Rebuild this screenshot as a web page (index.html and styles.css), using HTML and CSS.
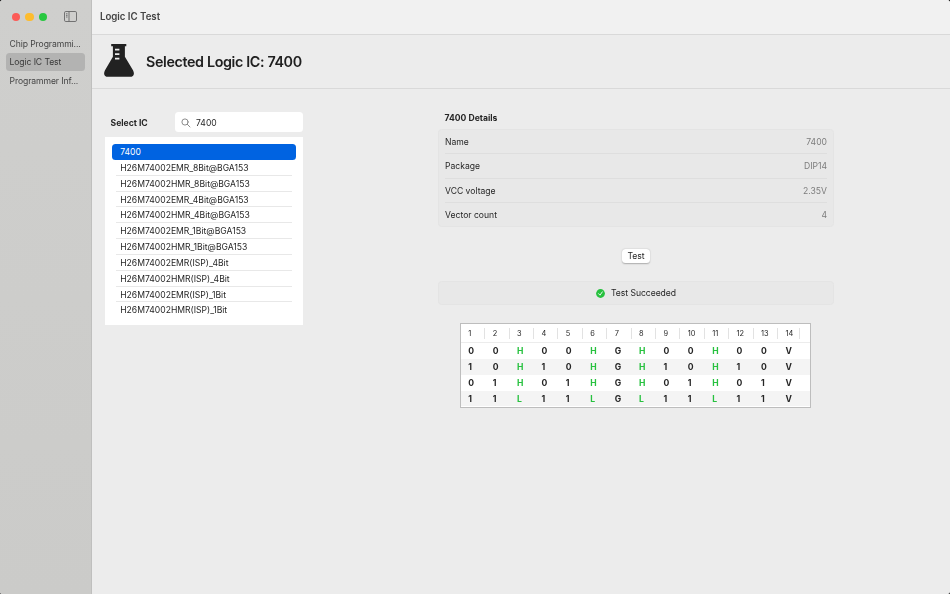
FILE: index.html
```html
<!DOCTYPE html>
<html lang="en">
<head>
<meta charset="utf-8">
<title>Logic IC Test</title>
<link rel="stylesheet" href="styles.css">
</head>
<body>
<div class="window">
  <aside class="sidebar">
    <div class="controls">
      <span class="light red"></span><span class="light yellow"></span><span class="light green"></span>
      <svg class="toggle" width="13" height="11" viewBox="0 0 13 11" fill="none" stroke="#686868" stroke-width=".9"><rect x=".5" y=".5" width="12" height="10" rx="1.300"/><path d="M5 .5v10M2 2.800h1.500M2 4.400h1.500M2 6h1.500"/></svg>
    </div>
    <nav>
      <a class="nav-item">Chip Programmi...</a>
      <a class="nav-item active">Logic IC Test</a>
      <a class="nav-item">Programmer Inf...</a>
    </nav>
  </aside>
  <main class="main">
    <header class="titlebar">Logic IC Test</header>
    <section class="banner">
      <svg class="flask" width="30" height="33" viewBox="0 0 30 33"><path fill="#222" fill-rule="evenodd" d="M7.200 0h15.100v2.200h-1.400v10.600l8.100 13.500c2.100 3.900.3 6.500-3 6.500H4c-3.300 0-5.100-2.600-3-6.500L8.900 12.800V2.200H7.200zM11 4.700v1.700h4.400V4.700zM11 9.200v1.700h4.400V9.200zM11 13.700v1.700h4.400v-1.700z"/></svg>
      <h1>Selected Logic IC: 7400</h1>
    </section>
    <div class="content">
      <section class="picker">
        <div class="search-row">
          <label>Select IC</label>
          <div class="search">
            <svg width="10" height="10" viewBox="0 0 10 10" fill="none" stroke="#808080" stroke-width=".9" stroke-linecap="round"><circle cx="4" cy="4" r="3.100"/><path d="M6.300 6.300 9 9"/></svg>
            <span>7400</span>
          </div>
        </div>
        <ul class="list">
          <li class="selected">7400</li>
          <li>H26M74002EMR_8Bit@BGA153</li>
          <li>H26M74002HMR_8Bit@BGA153</li>
          <li>H26M74002EMR_4Bit@BGA153</li>
          <li>H26M74002HMR_4Bit@BGA153</li>
          <li>H26M74002EMR_1Bit@BGA153</li>
          <li>H26M74002HMR_1Bit@BGA153</li>
          <li>H26M74002EMR(ISP)_4Bit</li>
          <li>H26M74002HMR(ISP)_4Bit</li>
          <li>H26M74002EMR(ISP)_1Bit</li>
          <li>H26M74002HMR(ISP)_1Bit</li>
        </ul>
      </section>
      <section class="details">
        <h2>7400 Details</h2>
        <dl class="box">
          <div><dt>Name</dt><dd>7400</dd></div>
          <div><dt>Package</dt><dd>DIP14</dd></div>
          <div><dt>VCC voltage</dt><dd>2.35V</dd></div>
          <div><dt>Vector count</dt><dd>4</dd></div>
        </dl>
        <button class="test">Test</button>
        <div class="box status">
          <svg width="9" height="9" viewBox="0 0 9 9"><circle cx="4.500" cy="4.500" r="4.400" fill="#27c13f"/><path d="M2.600 4.700 4 6.200 6.300 2.900" fill="none" stroke="#fff" stroke-width=".9" stroke-linecap="round" stroke-linejoin="round"/></svg>
          <span>Test Succeeded</span>
        </div>
        <div class="vectors">
          <div class="vrow head"><span>1</span><span>2</span><span>3</span><span>4</span><span>5</span><span>6</span><span>7</span><span>8</span><span>9</span><span>10</span><span>11</span><span>12</span><span>13</span><span>14</span></div>
          <div class="vrow"><b>0</b><b>0</b><b class="out">H</b><b>0</b><b>0</b><b class="out">H</b><b>G</b><b class="out">H</b><b>0</b><b>0</b><b class="out">H</b><b>0</b><b>0</b><b>V</b></div>
          <div class="vrow alt"><b>1</b><b>0</b><b class="out">H</b><b>1</b><b>0</b><b class="out">H</b><b>G</b><b class="out">H</b><b>1</b><b>0</b><b class="out">H</b><b>1</b><b>0</b><b>V</b></div>
          <div class="vrow"><b>0</b><b>1</b><b class="out">H</b><b>0</b><b>1</b><b class="out">H</b><b>G</b><b class="out">H</b><b>0</b><b>1</b><b class="out">H</b><b>0</b><b>1</b><b>V</b></div>
          <div class="vrow alt"><b>1</b><b>1</b><b class="out">L</b><b>1</b><b>1</b><b class="out">L</b><b>G</b><b class="out">L</b><b>1</b><b>1</b><b class="out">L</b><b>1</b><b>1</b><b>V</b></div>
        </div>
      </section>
    </div>
  </main>
</div>
</body>
</html>
```
FILE: styles.css
```css
* { box-sizing: border-box; margin: 0; padding: 0; }
body { background: #000; font-family: Inter, "Liberation Sans", sans-serif; font-size: 8.6px; color: #262626; overflow: hidden; }
.window { display: flex; width: 950px; height: 594px; border-radius: 3px 3px 2px 2px; overflow: hidden; background: #ececec; will-change: opacity; }
.sidebar { width: 92px; flex: none; background: linear-gradient(#cfcfcd, #cbcbc9); border-right: 1px solid #bfbfbe; }
.controls { display: flex; align-items: center; height: 34px; padding-left: 12px; gap: 5px; }
.light { width: 8.300px; height: 8.300px; border-radius: 50%; }
.red { background: #fc5b57; }
.yellow { background: #fdbc2e; }
.green { background: #28c840; }
.toggle { margin-left: 12px; margin-top: -1px; }
nav { padding: 0 6px 0 5.500px; }
.nav-item { display: block; height: 18.500px; line-height: 20px; padding-left: 4px; border-radius: 3.500px; color: #444; white-space: nowrap; letter-spacing: -.09px; }
.active { background: #b3b3b2; color: #3a3a3a; line-height: 19.500px; }
.main { flex: 1; }
.titlebar { height: 35px; line-height: 34px; padding-left: 8px; background: #f1f1f1; border-bottom: 1px solid #d9d9d9; font-size: 9.700px; font-weight: 600; letter-spacing: -.03px; color: #444; }
.banner { display: flex; align-items: center; height: 54px; padding: 0 0 1px 12px; gap: 12px; border-bottom: 1px solid #d9d9d9; }
.flask { margin-top: -.5px; }
h1 { font-size: 14.300px; font-weight: 600; letter-spacing: -.36px; color: #202020; }
.content { display: flex; align-items: flex-start; }
.picker { width: 198px; margin: 23px 0 0 13px; }
.search-row { display: flex; align-items: center; justify-content: space-between; height: 20px; padding-left: 5.500px; }
label, h2 { font-size: 8.600px; font-weight: 700; }
label { padding-top: 1px; }
.search { display: flex; align-items: center; gap: 5px; width: 128px; height: 20px; padding: 1px 0 0 6px; border-radius: 3.500px; background: #fff; }
.list { list-style: none; margin-top: 5px; height: 188px; padding: 7px 7px 0 7px; background: #fff; }
.list li { position: relative; height: 15.850px; line-height: 17.500px; padding-left: 8.200px; }
.list li:not(.selected):not(:last-child)::after { content: ""; position: absolute; left: 4px; right: 4px; bottom: 0; height: 1px; background: #e8e8e8; }
.list .selected { background: #0063e1; color: #fff; border-radius: 3.500px; }
.details { width: 396px; margin: 23px 0 0 135px; display: flex; flex-direction: column; }
h2 { height: 17px; line-height: 12px; padding-left: 6.500px; }
.box { background: #e8e8e8; border: 1px solid #e4e4e4; border-radius: 3.500px; }
dl.box { height: 98px; padding: 0 6px; }
dl div { display: flex; justify-content: space-between; height: 24.250px; line-height: 24px; border-bottom: 1px solid #dedede; }
dl div:last-child { border-bottom: 0; }
dd { color: #7c7c7c; }
.test { align-self: center; width: 28px; height: 14px; margin-top: 22px; font: inherit; color: #262626; background: #fff; border: 0; border-radius: 3.500px; box-shadow: 0 .5px 1.500px rgba(0, 0, 0, .28); }
.status { display: flex; align-items: center; justify-content: center; gap: 6px; height: 24px; margin-top: 18px; letter-spacing: -.04px; }
.vectors { width: 351px; height: 85px; margin: 18px 0 0 22px; background: #fff; border: 1px solid #bdbdbd; }
.vrow { display: grid; grid-template-columns: repeat(14, 24.400px); height: 15.850px; line-height: 16px; padding-left: 7.300px; font-size: 8.600px; }
.vrow.alt { background: #f4f4f4; }
.head { height: 19px; line-height: 19px; font-size: 7.400px; border-bottom: 1px solid #ececec; }
.head span { background: linear-gradient(#e2e2e2, #e2e2e2) 16px 4px / 1px 11px no-repeat; }
.head span:last-child { background-position-x: 14px; }
.vrow b { font-weight: 700; }
.out { color: #27c13f; }
```
